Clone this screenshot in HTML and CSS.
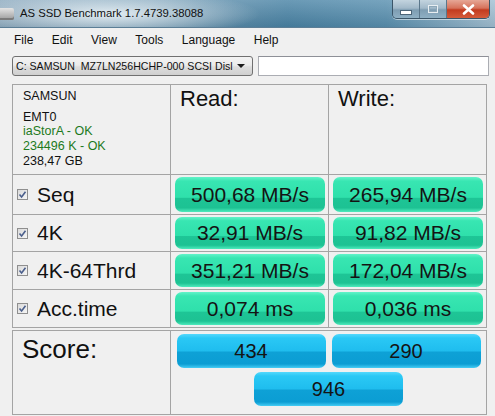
FILE: index.html
```html
<!DOCTYPE html>
<html lang="en">
<head>
  <meta charset="UTF-8">
  <meta name="viewport" content="width=device-width, initial-scale=1.0">
  <title>AS SSD Benchmark</title>
  <link rel="stylesheet" href="styles.css">
</head>
<body>

  <!-- Window caption -->
  <div class="titlebar">
    <span class="app-icon"></span>
    <span class="title">AS SSD Benchmark 1.7.4739.38088</span>
    <div class="caption-buttons">
      <span class="cap-btn cap-min"><span class="glyph-min"></span></span>
      <span class="cap-btn cap-max"><span class="glyph-max"></span></span>
      <span class="cap-btn cap-close">
        <svg width="13" height="11" viewBox="0 0 13 11">
          <path d="M2 1.5 L11 9.5 M11 1.5 L2 9.5" stroke="#fff" stroke-width="2.6" stroke-linecap="round"/>
        </svg>
      </span>
    </div>
  </div>

  <!-- Menu -->
  <div class="menubar">
    <span>File</span>
    <span>Edit</span>
    <span>View</span>
    <span>Tools</span>
    <span>Language</span>
    <span>Help</span>
  </div>

  <!-- Drive selection -->
  <div class="drive-row">
    <div class="combo">
      <span class="combo-text">C: SAMSUN  MZ7LN256HCHP-000 SCSI Disl</span>
      <span class="combo-arrow"></span>
    </div>
    <div class="textbox"></div>
  </div>

  <!-- Results -->
  <div class="results">
    <div class="cell drive-info">
      <div class="drive-name">SAMSUN</div>
      <div>EMT0</div>
      <div class="ok">iaStorA - OK</div>
      <div class="ok">234496 K - OK</div>
      <div>238,47 GB</div>
    </div>
    <div class="cell col-head">Read:</div>
    <div class="cell col-head">Write:</div>

    <div class="cell test"><span class="check"><svg width="9" height="9" viewBox="0 0 9 9"><path d="M1.5 4.5 L3.6 7 L7.5 1.8" fill="none" stroke="#4b5f8c" stroke-width="1.6"/></svg></span>Seq</div>
    <div class="cell value"><div class="meter">500,68 MB/s</div></div>
    <div class="cell value"><div class="meter">265,94 MB/s</div></div>

    <div class="cell test"><span class="check"><svg width="9" height="9" viewBox="0 0 9 9"><path d="M1.5 4.5 L3.6 7 L7.5 1.8" fill="none" stroke="#4b5f8c" stroke-width="1.6"/></svg></span>4K</div>
    <div class="cell value"><div class="meter">32,91 MB/s</div></div>
    <div class="cell value"><div class="meter">91,82 MB/s</div></div>

    <div class="cell test"><span class="check"><svg width="9" height="9" viewBox="0 0 9 9"><path d="M1.5 4.5 L3.6 7 L7.5 1.8" fill="none" stroke="#4b5f8c" stroke-width="1.6"/></svg></span>4K-64Thrd</div>
    <div class="cell value"><div class="meter">351,21 MB/s</div></div>
    <div class="cell value"><div class="meter">172,04 MB/s</div></div>

    <div class="cell test"><span class="check"><svg width="9" height="9" viewBox="0 0 9 9"><path d="M1.5 4.5 L3.6 7 L7.5 1.8" fill="none" stroke="#4b5f8c" stroke-width="1.6"/></svg></span>Acc.time</div>
    <div class="cell value"><div class="meter">0,074 ms</div></div>
    <div class="cell value"><div class="meter">0,036 ms</div></div>
  </div>

  <!-- Score -->
  <div class="score">
    <div class="cell score-label">Score:</div>
    <div class="cell score-values">
      <div class="meter blue">434</div>
      <div class="meter blue">290</div>
      <div class="meter blue">946</div>
    </div>
  </div>

</body>
</html>
```

FILE: styles.css
```css
body {
  margin: 0;
  background-color: #f0f0f0;
  font-family: "Liberation Sans", Arial, sans-serif;
  color: #111;
  width: 495px;
  height: 416px;
  overflow: hidden;
}

/* Caption bar */
.titlebar {
  height: 27px;
  border-bottom: 1px solid #5b7e96;
  display: flex;
  align-items: flex-start;
  background:
    radial-gradient(ellipse 150px 24px at 110px 14px, rgba(238, 245, 249, 0.9), rgba(238, 245, 249, 0)),
    linear-gradient(to bottom, rgba(255, 255, 255, 0.18), rgba(0, 0, 0, 0.08)),
    linear-gradient(to right, #86a5bb 0%, #6893ae 35%, #4a84a6 58%, #5990b0 78%, #a2c0d3 100%);
}
.app-icon {
  width: 14px;
  height: 12px;
  margin: 8px 0 0 0;
  border-radius: 0 2px 2px 0;
  background: linear-gradient(#e4e4e4, #9a9a9a);
  box-shadow: inset 0 -2px 0 #7a7a7a;
}
.title {
  margin: 7px 0 0 6px;
  font-size: 11.3px;
  color: #111;
}
.caption-buttons {
  margin-left: auto;
  margin-right: 5px;
  display: flex;
  height: 18px;
  border: 1px solid #3b5568;
  border-top: none;
  border-radius: 0 0 5px 5px;
  overflow: hidden;
  box-shadow: 0 1px 0 rgba(255, 255, 255, 0.5);
}
.cap-btn {
  display: flex;
  align-items: center;
  justify-content: center;
  height: 18px;
}
.cap-min, .cap-max {
  width: 26px;
  background: linear-gradient(#c3d4df 0%, #a2b9c9 45%, #7e9db2 55%, #8fb0c4 100%);
  border-right: 1px solid #5b778b;
}
.cap-close {
  width: 42px;
  background: linear-gradient(#e6a796 0%, #d6725b 45%, #c23b1f 55%, #d55b3a 100%);
}
.glyph-min {
  width: 10px;
  height: 3px;
  margin-top: 6px;
  background: #fff;
  border: 1px solid #4c6578;
}
.glyph-max {
  width: 8px;
  height: 6px;
  border: 1px solid #e8eef2;
  box-shadow: inset 0 0 0 1px #8ea8b9;
}

/* Menu strip */
.menubar {
  height: 24px;
  display: flex;
  align-items: center;
  gap: 18.5px;
  padding-left: 14px;
  font-size: 12px;
}

/* Drive picker */
.drive-row {
  display: flex;
  gap: 5px;
  padding: 4px 0 0 12px;
}
.combo {
  width: 239px;
  height: 18px;
  border: 1px solid #707070;
  border-radius: 3px;
  background: linear-gradient(#f3f3f3 0%, #ebebeb 45%, #dddddd 55%, #cfcfcf 100%);
  display: flex;
  align-items: center;
  justify-content: space-between;
}
.combo-text {
  padding-left: 3px;
  font-size: 10.6px;
  white-space: pre;
}
.combo-arrow {
  width: 0;
  height: 0;
  margin: 0 7px 0 0;
  border-left: 4px solid transparent;
  border-right: 4px solid transparent;
  border-top: 4px solid #1a1a1a;
}
.textbox {
  width: 229px;
  height: 18px;
  border: 1px solid #abadb3;
  border-top-color: #8e9097;
  background: #fff;
}

/* Result grid */
.results, .score {
  display: grid;
  gap: 1px;
  padding: 1px;
  width: 473px;
  margin-left: 12px;
  background: #a4a4a4;
}
.results {
  margin-top: 8px;
  grid-template-columns: 157px 157px 157px;
  grid-template-rows: 89px 39px 36px 37px 37px;
}
.score {
  margin-top: 2px;
  grid-template-columns: 157px 315px;
  grid-template-rows: 83px;
}
.cell {
  background: #f0f0f0;
}
.drive-info {
  padding: 4px 0 0 10px;
  font-size: 12.5px;
  line-height: 14.7px;
}
.drive-name {
  margin-bottom: 6px;
}
.ok {
  color: #1d7a1d;
}
.col-head {
  padding: 2px 0 0 9px;
  font-size: 22px;
  line-height: 24px;
}
.test {
  display: flex;
  align-items: center;
  padding-left: 4px;
  font-size: 21px;
}
.check {
  width: 9px;
  height: 9px;
  margin-right: 9px;
  border: 1px solid #8f8f8f;
  background: linear-gradient(135deg, #dadada, #f6f6f6);
  display: flex;
}
.value {
  padding: 2px 3px 2px 4px;
}

/* Glossy result bars */
.meter {
  height: 100%;
  border-radius: 7px;
  display: flex;
  align-items: center;
  justify-content: center;
  font-size: 21px;
  color: #141414;
  background: linear-gradient(to bottom, #62f3c9 0%, #38e6b2 12%, #2fe0ab 58%, #1ec596 61%, #1dc293 88%, #4eebbd 100%);
  box-sizing: border-box;
}
.score-label {
  padding: 3px 0 0 9px;
  font-size: 26px;
  line-height: 30px;
}
.score-values {
  display: flex;
  flex-wrap: wrap;
  justify-content: center;
  align-content: flex-start;
  gap: 4px 6px;
  padding-top: 3px;
}
.meter.blue {
  width: 149px;
  height: 34px;
  font-size: 20px;
  background: linear-gradient(to bottom, #55d8fc 0%, #2ac8f5 12%, #1fbdee 50%, #0ea1d6 53%, #0b9dd3 88%, #45cdf5 100%);
}
```
